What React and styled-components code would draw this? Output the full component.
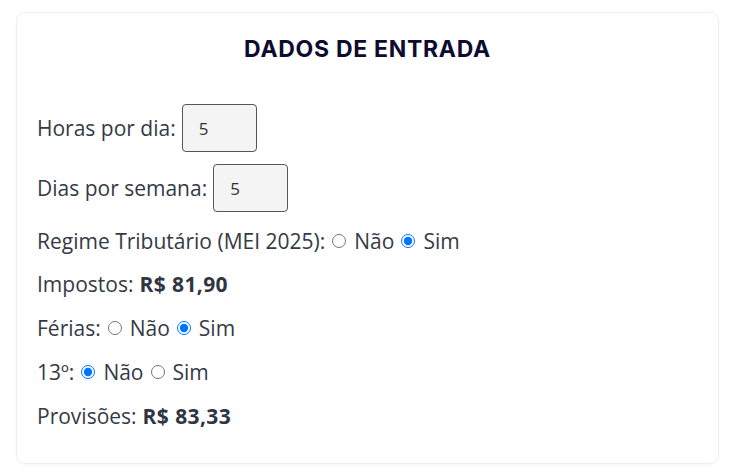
import React, { useState } from 'react';
import styled, { createGlobalStyle } from 'styled-components';

const GlobalStyle = createGlobalStyle`
  body {
    margin: 0;
    background: #ffffff;
    font-family: "Open Sans", "Noto Sans", sans-serif;
  }
`;

const Page = styled.div`
  padding: 12px 13px 12px 16px;
`;

const Card = styled.div`
  border: 1px solid #efefef;
  border-radius: 9px;
  box-shadow: 0 1px 3px rgba(0, 0, 0, 0.04);
  padding: 22px 20px 35px 20px;
  display: flex;
  flex-direction: column;
  color: #353a45;
`;

const Title = styled.h2`
  margin: 0 0 41px 0;
  text-align: center;
  font-family: Inter, "Noto Sans", sans-serif;
  font-weight: 700;
  font-size: 23px;
  letter-spacing: 0.7px;
  line-height: 28px;
  color: #0d0b30;
`;

const Row = styled.div`
  display: flex;
  align-items: center;
  height: ${(p) => (p.$tall ? 48 : 24)}px;
  margin-bottom: ${(p) => p.$gap}px;
  font-size: 21px;
  white-space: nowrap;
`;

const NumberInput = styled.input`
  box-sizing: border-box;
  width: 75px;
  height: 48px;
  margin-left: 6px;
  padding: 0 16px;
  border: 1px solid #555;
  border-radius: 4px;
  background: #f4f4f4;
  font-family: "Open Sans", "Noto Sans", sans-serif;
  font-size: 17px;
  color: #333;
`;

const Radio = styled.input`
  width: 14px;
  height: 14px;
  margin: 0 8px 0 7px;
`;

const Value = styled.strong`
  font-weight: 700;
  margin-left: 6px;
  letter-spacing: 0.4px;
  color: #2f3542;
`;

const RadioGroup = ({ name, value, onChange }) => (
  <>
    <Radio type="radio" name={name} checked={!value} onChange={() => onChange(false)} />
    Não
    <Radio type="radio" name={name} checked={value} onChange={() => onChange(true)} />
    Sim
  </>
);

export default function App() {
  const [horas, setHoras] = useState('5');
  const [dias, setDias] = useState('5');
  const [mei, setMei] = useState(true);
  const [ferias, setFerias] = useState(true);
  const [decimo, setDecimo] = useState(false);

  return (
    <Page>
      <GlobalStyle />
      <Card>
        <Title>DADOS DE ENTRADA</Title>
        <Row $tall $gap={12}>
          Horas por dia:
          <NumberInput value={horas} onChange={(e) => setHoras(e.target.value)} />
        </Row>
        <Row $tall $gap={17}>
          Dias por semana:
          <NumberInput value={dias} onChange={(e) => setDias(e.target.value)} />
        </Row>
        <Row $gap={19}>
          Regime Tributário (MEI 2025):
          <RadioGroup name="mei" value={mei} onChange={setMei} />
        </Row>
        <Row $gap={20}>
          Impostos:<Value>R$ 81,90</Value>
        </Row>
        <Row $gap={20}>
          Férias:
          <RadioGroup name="ferias" value={ferias} onChange={setFerias} />
        </Row>
        <Row $gap={20}>
          13º:
          <RadioGroup name="decimo" value={decimo} onChange={setDecimo} />
        </Row>
        <Row $gap={0}>
          Provisões:<Value>R$ 83,33</Value>
        </Row>
      </Card>
    </Page>
  );
}
